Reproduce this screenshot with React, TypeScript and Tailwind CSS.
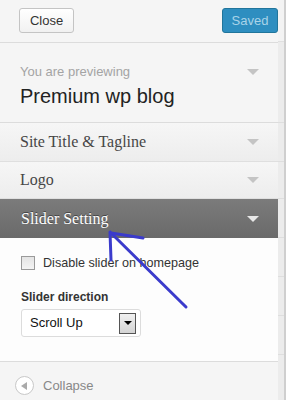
import React from 'react';

const Caret = ({ dark }: { dark?: boolean }) => (
  <span
    className={`block w-0 h-0 border-l-[6px] border-r-[6px] border-t-[6px] border-l-transparent border-r-transparent ${
      dark ? 'border-t-[#e8e8e8]' : 'border-t-[#c4c4c4]'
    }`}
  />
);

const Section = ({ title, h }: { title: string; h: string }) => (
  <div
    className={`${h} flex items-center justify-between pl-[20px] pr-[19px] border-b border-[#dfdfdf] bg-gradient-to-b from-[#f6f6f6] to-[#ededed]`}
  >
    <span className="text-[16px] text-[#464646] font-['Liberation_Serif',serif]">{title}</span>
    <Caret />
  </div>
);

export default function App() {
  return (
    <div className="relative w-[300px] h-[400px] overflow-hidden bg-white flex font-['Liberation_Sans',Arial,sans-serif]">
      {/* Customizer panel */}
      <div className="w-[278px] flex flex-col bg-[#f5f5f5]">
        {/* Top bar */}
        <div className="h-[43px] flex items-start justify-between pt-[8px] pl-[19px] border-b border-[#dcdcdc]">
          <button className="w-[55px] h-[25px] rounded-[3px] border border-[#c4c4c4] bg-gradient-to-b from-white to-[#f1f1f1] text-[13px] text-[#333]">
            Close
          </button>
          <button className="w-[56px] h-[25px] rounded-[3px] border border-[#21759b] bg-[#2e8ec0] text-[13px] text-[#a9d3e8]">
            Saved
          </button>
        </div>

        {/* Previewing */}
        <div className="h-[80px] pl-[20px] pr-[19px] pt-[19px] border-b border-[#dcdcdc]">
          <div className="flex items-center justify-between">
            <span className="text-[13px] text-[#a4a4a4]">You are previewing</span>
            <Caret />
          </div>
          <div className="mt-[1px] text-[20px] text-[#222] leading-[26px]">Premium wp blog</div>
        </div>

        <Section title="Site Title & Tagline" h="h-[39px]" />
        <Section title="Logo" h="h-[37px]" />

        {/* Open section */}
        <div className="h-[39px] flex items-center justify-between pl-[21px] pr-[19px] bg-gradient-to-b from-[#7b7b7b] to-[#6a6a6a]">
          <span className="text-[16px] text-white font-['Liberation_Serif',serif] [text-shadow:0_-1px_0_#444]">
            Slider Setting
          </span>
          <Caret dark />
        </div>
        <div className="h-[124px] bg-[#fdfdfd] border-b border-[#dcdcdc] pl-[21px] pt-[15px]">
          <label className="flex items-center gap-[8px] h-[20px]">
            <span className="w-[14px] h-[14px] border border-[#9a9a9a] bg-gradient-to-b from-[#e4e4e4] to-[#f4f4f4]" />
            <span className="text-[12.6px] text-[#333]">Disable slider on homepage</span>
          </label>
          <div className="mt-[16px] text-[12px] leading-[16px] font-bold text-[#333]">Slider direction</div>
          <div className="mt-[4px] w-[120px] h-[28px] rounded-[3px] border border-[#dcdcdc] bg-white flex items-center justify-between pl-[8px] pr-[4px]">
            <span className="text-[13px] text-[#111]">Scroll Up</span>
            <span className="w-[17px] h-[21px] border border-[#555] bg-gradient-to-b from-[#f0f0f0] to-[#d4d4d4] flex items-center justify-center">
              <span className="block w-0 h-0 border-l-[4px] border-r-[4px] border-t-[4px] border-l-transparent border-r-transparent border-t-black" />
            </span>
          </div>
        </div>

        {/* Collapse */}
        <div className="flex-1 flex items-start gap-[9px] pl-[15px] pt-[14px] bg-[#f5f5f5]">
          <span className="w-[19px] h-[19px] rounded-full border border-[#c8c8c8] bg-white flex items-center justify-center">
            <span className="block w-0 h-0 border-t-[4px] border-b-[4px] border-r-[6px] border-t-transparent border-b-transparent border-r-[#aaa] -ml-[1px]" />
          </span>
          <span className="text-[13px] leading-[19px] text-[#888]">Collapse</span>
        </div>
      </div>

      {/* Right edge strip */}
      <div className="w-[8px] flex flex-col bg-[#ececec] border-r-2 border-[#cfcfcf]">
        <div className="h-[42px] border-b border-[#e0e0e0] bg-[#f3f3f3]" />
        <div className="h-[81px] border-b border-[#dedede]" />
        <div className="h-[39px] border-b border-[#dedede]" />
        <div className="h-[37px] border-b border-[#dedede]" />
        <div className="h-[39px] border-b border-[#dedede]" />
        <div className="h-[39px] border-b border-[#dedede]" />
        <div className="h-[39px] border-b border-[#dedede]" />
        <div className="h-[39px] border-b border-[#dedede]" />
        <div className="flex-1" />
      </div>

      {/* Annotation arrow */}
      <svg className="absolute left-0 top-0 pointer-events-none" width="300" height="400">
        <g stroke="#3b3bcc" strokeWidth="3" fill="none" strokeLinecap="round">
          <path d="M186 307 L111 233" />
          <path d="M110 232 L111 260" />
          <path d="M111 233 L143 238" />
        </g>
      </svg>
    </div>
  );
}
